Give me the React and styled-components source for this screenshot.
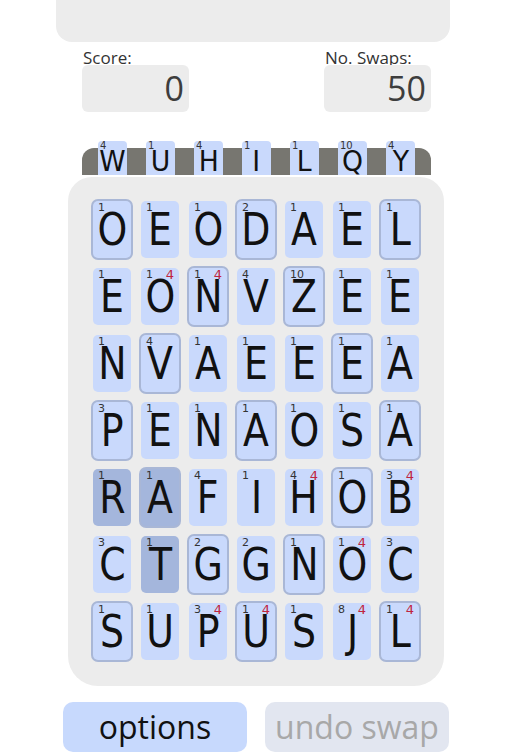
import React from "react";
import styled, { createGlobalStyle, css } from "styled-components";

const Global = createGlobalStyle`
  html, body { margin: 0; padding: 0; background: #ffffff; }
  body { font-family: "Open Sans", "Liberation Sans", sans-serif; }
`;

const Page = styled.div`
  width: 513px;
  height: 755px;
  overflow: hidden;
  display: flex;
  flex-direction: column;
`;

const TopBox = styled.div`
  margin-left: 56px;
  width: 394px;
  height: 42px;
  background: #ececec;
  border-radius: 0 0 16px 16px;
`;

const ScoreRow = styled.div`
  display: flex;
  justify-content: space-between;
  margin: 8px 82px 0 82px;
`;

const ScoreGroup = styled.div`
  display: flex;
  flex-direction: column;
  width: 107px;
`;

const Label = styled.div`
  font-family: "Open Sans", sans-serif;
  font-size: 17px;
  line-height: 16px;
  color: #333;
  padding-left: 1px;
`;

const ValueBox = styled.div`
  margin-top: -1px;
  height: 47px;
  background: #ececec;
  border-radius: 6px;
  font-family: "Open Sans", sans-serif;
  font-size: 34px;
  line-height: 47px;
  color: #3d3d3d;
  text-align: right;
  padding-right: 5px;
  box-sizing: border-box;
`;

const Tray = styled.div`
  margin: 36px 82px 0 82px;
  height: 27px;
  background: #777670;
  border-radius: 12px 12px 0 0;
  display: flex;
  align-items: flex-end;
  gap: 19px;
  padding: 0 16px;
`;

const TrayTile = styled.div`
  position: relative;
  flex: 0 0 29px;
  height: 34px;
  background: #c9d9fc;
  border-radius: 4px 4px 0 0;
  display: flex;
  align-items: flex-end;
  justify-content: center;
`;

const TrayLetter = styled.span`
  display: inline-block;
  font-family: "DejaVu Sans", sans-serif;
  font-size: 29px;
  line-height: 29px;
  color: #111;
  margin-bottom: -1px;
  transform: scaleX(0.92);
`;

const TrayNum = styled.span`
  position: absolute;
  left: 2px;
  top: 0px;
  font-family: "DejaVu Sans", sans-serif;
  font-size: 10px;
  line-height: 10px;
  color: #333;
`;

const Panel = styled.div`
  margin: 2px 0 0 68px;
  width: 376px;
  background: #ececec;
  border-radius: 24px 24px 30px 30px;
  padding: 24px 25px 26px 25px;
  box-sizing: border-box;
`;

const Grid = styled.div`
  display: grid;
  grid-template-columns: repeat(7, 38px);
  grid-auto-rows: 57px;
  column-gap: 10px;
  row-gap: 10px;
`;

const Tile = styled.div`
  position: relative;
  background: ${(p) => (p.$dark ? "#a4b6dc" : "#c9d9fc")};
  border-radius: 5px;
  display: flex;
  align-items: center;
  justify-content: center;
  ${(p) =>
    p.$bordered &&
    css`
      box-shadow: 0 0 0 2px #a9b7d6;
      border-radius: 5px;
    `}
`;

const Letter = styled.span`
  display: inline-block;
  font-family: "DejaVu Sans", sans-serif;
  font-size: 44px;
  line-height: 44px;
  color: #111;
  transform: scaleX(0.86);
`;

const Num = styled.span`
  position: absolute;
  left: 5px;
  top: 1px;
  font-family: "DejaVu Sans", sans-serif;
  font-size: 11px;
  line-height: 11px;
  color: #333;
`;

const Bonus = styled.span`
  position: absolute;
  right: 5px;
  top: 0px;
  font-family: "DejaVu Sans", sans-serif;
  font-size: 13px;
  line-height: 13px;
  color: #c0243f;
`;

const ButtonRow = styled.div`
  display: flex;
  gap: 18px;
  margin: 16px 0 0 63px;
`;

const Button = styled.div`
  width: 184px;
  height: 50px;
  border-radius: 10px;
  background: ${(p) => (p.$disabled ? "#e2e6f0" : "#c7d9fd")};
  color: ${(p) => (p.$disabled ? "#a8a8a8" : "#111")};
  font-family: "Open Sans", sans-serif;
  font-size: 32px;
  line-height: 50px;
  text-align: center;
`;

const tray = [
  ["W", 4],
  ["U", 1],
  ["H", 4],
  ["I", 1],
  ["L", 1],
  ["Q", 10],
  ["Y", 4],
];

const rows = [
  [["O", 1, "b"], ["E", 1], ["O", 1], ["D", 2, "b"], ["A", 1], ["E", 1], ["L", 1, "b"]],
  [["E", 1], ["O", 1, "", 4], ["N", 1, "b", 4], ["V", 4], ["Z", 10, "b"], ["E", 1], ["E", 1]],
  [["N", 1], ["V", 4, "b"], ["A", 1], ["E", 1], ["E", 1], ["E", 1, "b"], ["A", 1]],
  [["P", 3, "b"], ["E", 1], ["N", 1], ["A", 1, "b"], ["O", 1], ["S", 1], ["A", 1, "b"]],
  [["R", 1, "d"], ["A", 1, "bd"], ["F", 4], ["I", 1], ["H", 4, "", 4], ["O", 1, "b"], ["B", 3, "", 4]],
  [["C", 3], ["T", 1, "d"], ["G", 2, "b"], ["G", 2], ["N", 1, "b"], ["O", 1, "", 4], ["C", 3]],
  [["S", 1, "b"], ["U", 1], ["P", 3, "", 4], ["U", 1, "b", 4], ["S", 1], ["J", 8, "", 4], ["L", 1, "b", 4]],
];

export default function App() {
  return (
    <>
      <Global />
      <Page>
        <TopBox />
        <ScoreRow>
          <ScoreGroup>
            <Label>Score:</Label>
            <ValueBox>0</ValueBox>
          </ScoreGroup>
          <ScoreGroup>
            <Label>No. Swaps:</Label>
            <ValueBox>50</ValueBox>
          </ScoreGroup>
        </ScoreRow>
        <Tray>
          {tray.map(([l, n], i) => (
            <TrayTile key={i}>
              <TrayNum>{n}</TrayNum>
              <TrayLetter>{l}</TrayLetter>
            </TrayTile>
          ))}
        </Tray>
        <Panel>
          <Grid>
            {rows.flatMap((row, r) =>
              row.map(([l, n, f = "", red], c) => (
                <Tile
                  key={`${r}-${c}`}
                  $bordered={f.includes("b")}
                  $dark={f.includes("d")}
                >
                  <Num>{n}</Num>
                  {red ? <Bonus>{red}</Bonus> : null}
                  <Letter>{l}</Letter>
                </Tile>
              ))
            )}
          </Grid>
        </Panel>
        <ButtonRow>
          <Button>options</Button>
          <Button $disabled>undo swap</Button>
        </ButtonRow>
      </Page>
    </>
  );
}
